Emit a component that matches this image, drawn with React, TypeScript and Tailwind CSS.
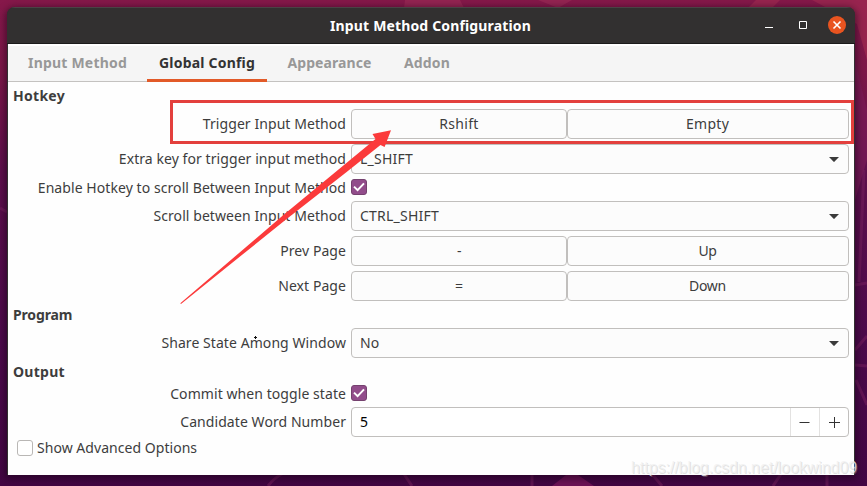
import type { ReactNode } from 'react';

function Backdrop() {
  return (
    <svg className="absolute inset-0" width="867" height="486" viewBox="0 0 867 486" aria-hidden="true">
      <defs>
        <linearGradient id="wall" x1="0" y1="0" x2="0" y2="1">
          <stop offset="0" stopColor="#86184a" />
          <stop offset="0.15" stopColor="#7c1748" />
          <stop offset="0.35" stopColor="#5e0f4c" />
          <stop offset="0.7" stopColor="#4c0a4b" />
          <stop offset="1" stopColor="#430643" />
        </linearGradient>
      </defs>
      <rect width="867" height="486" fill="url(#wall)" />
      <path d="M405 0h55l4 8h-60zM538 0h34l-14 8z" fill="#9a2a55" opacity=".7" />
      <path d="M748 8l8-8h24l-8 8zM812 0h55v60l-10-36z" fill="#9c2850" opacity=".8" />
      <path d="M855 60l12 50v50l-12 40z" fill="#7d1c58" opacity=".6" />
      <g stroke="#7a2160" strokeWidth="3" fill="none" opacity=".5">
        <path d="M864 170l-5 112M855 285l12-2M855 365l12 1M855 350l12-14M856 380l11 25" />
        <path d="M268 486q6-8 14-12M404 474l8 12M532 474v12M652 474l10 12M781 474l-8 12M827 474v12M0 208l7 4" />
      </g>
      <path d="M552 486l14-11h12l16 11z" fill="#6c1256" />
    </svg>
  );
}

function Button({ children, className }: { children: ReactNode; className: string }) {
  return (
    <button className={`flex h-[30px] items-center justify-center rounded border border-[#c1bfbd] bg-[#fcfcfc] ${className}`}>
      {children}
    </button>
  );
}

function KeyPair({ first, second, className = '' }: { first: string; second: string; className?: string }) {
  return (
    <div className={`flex w-[498px] ${className}`}>
      <Button className="w-[216px]">{first}</Button>
      <Button className="w-[282px] pr-px">{second}</Button>
    </div>
  );
}

function Select({ value }: { value: string }) {
  return (
    <div className="flex h-[30px] w-[498px] items-center justify-between rounded border border-[#c1bfbd] bg-[#fcfcfc] pr-[9px] pl-2 tracking-[0.22px]">
      <span>{value}</span>
      <svg width="10" height="5" viewBox="0 0 10 5" fill="#3b3b3b"><path d="M0 0h10L5.6 4.6q-.6.6-1.2 0z" /></svg>
    </div>
  );
}

function Checked() {
  return (
    <div className="mb-px flex h-4 w-4 items-center justify-center rounded-[3px] border border-[#75416f] bg-[#924d8b]">
      <svg className="shrink-0" width="12" height="10" viewBox="0 0 12 10" fill="none" stroke="#fff" strokeWidth="2"><path d="M1 4.6l3.6 3.5L11 1.4" /></svg>
    </div>
  );
}

function Row({ label, className = 'h-[30px]', children }: { label: string; className?: string; children: ReactNode }) {
  return (
    <div className={`flex items-center ${className}`}>
      <div className="w-[338px] text-right whitespace-nowrap tracking-[0.07px]">{label}</div>
      <div className="ml-[5px]">{children}</div>
    </div>
  );
}

function Heading({ children, className = '' }: { children: ReactNode; className?: string }) {
  return <h2 className={`flex h-[27px] items-center pl-[5px] font-bold ${className}`}>{children}</h2>;
}

export default function App() {
  return (
    <div className="relative h-[486px] w-[867px] overflow-hidden bg-[#4a0849] font-['Noto_Sans','Open_Sans',sans-serif] text-[14px] leading-[20px] text-[#3d3d3d]">
      <Backdrop />
      <div className="relative pt-[7px] pl-[7px]">
        <div className="flex h-[468px] w-[848px] flex-col overflow-hidden rounded-t-lg bg-[#323030] shadow-[0_2px_7px_2px_rgba(20,0,20,0.5)]">
          <header className="flex h-[37px] shrink-0 items-center border-t border-b border-t-[#4b4245] border-b-[#1c1b1b] bg-[#323030]">
            <div className="w-[120px]" />
            <h1 className="flex-1 text-center font-bold tracking-[0.15px] text-white">Input Method Configuration</h1>
            <div className="flex w-[121px] items-center pb-[2px]">
              <svg className="ml-[30px]" width="82" height="18" viewBox="0 0 82 18" fill="none">
                <path d="M1 11.5h8" stroke="#fff" />
                <path d="M35.5 5.5h7v7h-7z" stroke="#fff" />
                <circle cx="73" cy="9" r="9" fill="#e95420" />
                <path d="M69.5 5.5l7 7M76.5 5.5l-7 7" stroke="#fff" strokeWidth="1.6" />
              </svg>
            </div>
          </header>

          <main className="ml-px flex w-[846px] flex-1 flex-col bg-[#fefefe]">
            <nav className="flex h-[38px] shrink-0 border-t-2 border-b border-t-white border-b-[#c4c2c0] bg-[#f5f5f5] font-bold tracking-[0.2px] text-[#989898]">
              <div className="flex w-[139px] items-center justify-center pb-[2px]">Input Method</div>
              <div className="-mb-px flex w-[120px] items-center justify-center border-b-[3px] border-[#e25a28] text-[#333]">Global Config</div>
              <div className="flex w-[125px] items-center justify-center pb-[2px] tracking-[0.08px]">Appearance</div>
              <div className="flex w-[70px] items-center justify-center pb-[2px]">Addon</div>
            </nav>

            <Heading className="tracking-[0.28px]">Hotkey</Heading>
            <Row label="Trigger Input Method"><KeyPair first="Rshift" second="Empty" className="tracking-[0.3px]" /></Row>
            <Row label="Extra key for trigger input method" className="mt-[5px] h-[30px]"><Select value="L_SHIFT" /></Row>
            <Row label="Enable Hotkey to scroll Between Input Method" className="h-[27px]"><Checked /></Row>
            <Row label="Scroll between Input Method"><Select value="CTRL_SHIFT" /></Row>
            <Row label="Prev Page" className="mt-[5px] h-[30px]"><KeyPair first="-" second="Up" className="tracking-[-0.3px]" /></Row>
            <Row label="Next Page" className="mt-[5px] h-[30px]"><KeyPair first="=" second="Down" className="tracking-[-0.25px]" /></Row>

            <Heading className="tracking-[-0.15px]">Program</Heading>
            <Row label="Share State Among Window"><Select value="No" /></Row>

            <Heading className="tracking-[0.28px]">Output</Heading>
            <Row label="Commit when toggle state" className="mb-[5px] h-[17px]"><Checked /></Row>
            <Row label="Candidate Word Number">
              <div className="flex h-[30px] w-[498px] items-center rounded border border-[#c1bfbd] bg-white">
                <span className="flex-1 pl-2 text-black">5</span>
                <button className="flex h-7 w-[29px] items-center justify-center border-l border-[#e3e2e1] pr-px">
                  <svg width="11" height="11" viewBox="0 0 11 11" stroke="#333"><path d="M.5 5.5h10" /></svg>
                </button>
                <button className="flex h-7 w-[29px] items-center justify-center border-l border-[#e3e2e1]">
                  <svg width="11" height="11" viewBox="0 0 11 11" stroke="#333"><path d="M0 5.5h11M5.5 0v11" /></svg>
                </button>
              </div>
            </Row>
            <div className="mt-px flex items-center pl-[9px]">
              <div className="h-4 w-4 rounded-[3px] border border-[#b9b7b5] bg-white" />
              <span className="ml-1 tracking-[0.04px]">Show Advanced Options</span>
            </div>
          </main>
        </div>
      </div>

      {/* Annotations drawn over the window */}
      <div className="absolute top-[100px] left-[170px] h-[44px] w-[684px] border-3 border-[#e3403d]" />
      <svg className="absolute inset-0" width="867" height="486" viewBox="0 0 867 486">
        <path d="M180.3 303.3L284 214.5 375.5 139 372.5 134 391 130.2 384.6 147 380.5 145 346 172.5 286 219.5 181 304z" fill="#fb3a3b" />
        <path d="M254 337.5h3M255.5 336v3" stroke="#111" />
      </svg>
      <div className="absolute top-[458px] left-[631px] font-['Liberation_Sans',Arial,sans-serif] text-[16px] leading-[20px] tracking-[-0.05px] whitespace-nowrap text-[#f0f0f0]/80 [text-shadow:1px_1px_0_rgba(170,170,170,0.35)]">
        https://blog.csdn.net/lookwind09
      </div>
    </div>
  );
}
